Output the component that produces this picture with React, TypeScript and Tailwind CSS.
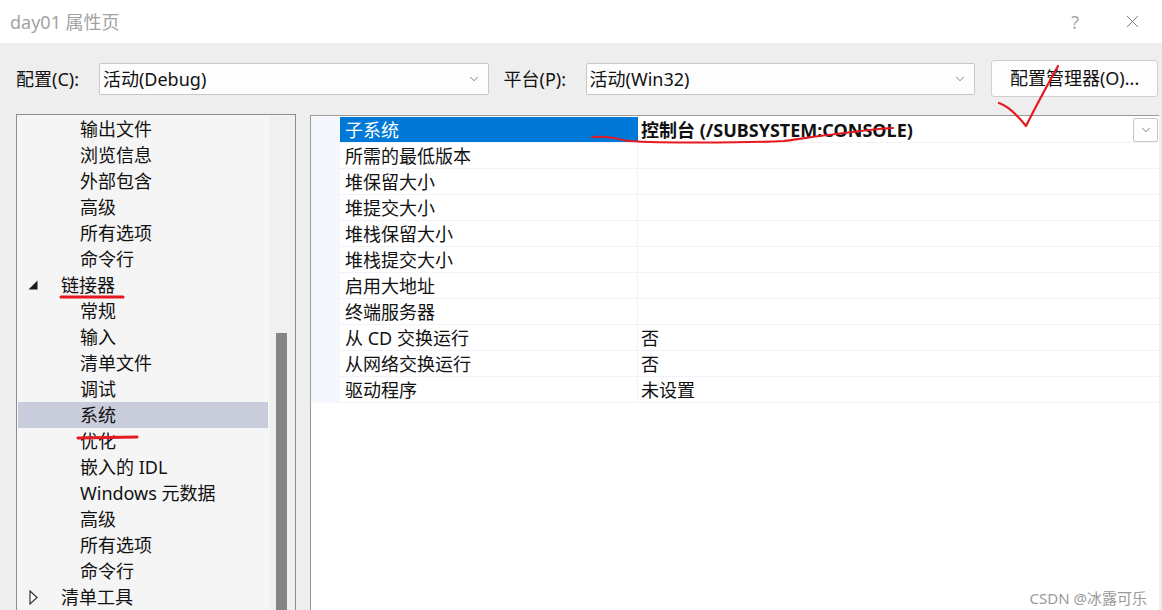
import { ChevronDown, X } from "lucide-react";

const treeTop = [
  { label: "输出文件", level: 1 },
  { label: "浏览信息", level: 1 },
  { label: "外部包含", level: 1 },
  { label: "高级", level: 1 },
  { label: "所有选项", level: 1 },
  { label: "命令行", level: 1 },
  { label: "链接器", level: 0, arrow: "open" },
  { label: "常规", level: 1 },
  { label: "输入", level: 1 },
  { label: "清单文件", level: 1 },
  { label: "调试", level: 1 },
  { label: "系统", level: 1, selected: true },
  { label: "优化", level: 1 },
  { label: "嵌入的 IDL", level: 1 },
  { label: "Windows 元数据", level: 1 },
  { label: "高级", level: 1 },
  { label: "所有选项", level: 1 },
  { label: "命令行", level: 1 },
  { label: "清单工具", level: 0, arrow: "closed" },
];

const props = [
  { name: "所需的最低版本", value: "" },
  { name: "堆保留大小", value: "" },
  { name: "堆提交大小", value: "" },
  { name: "堆栈保留大小", value: "" },
  { name: "堆栈提交大小", value: "" },
  { name: "启用大地址", value: "" },
  { name: "终端服务器", value: "" },
  { name: "从 CD 交换运行", value: "否" },
  { name: "从网络交换运行", value: "否" },
  { name: "驱动程序", value: "未设置" },
];

function Select({ text, width }: { text: string; width: string }) {
  return (
    <div className={`${width} h-[32px] flex items-center justify-between pl-[3px] pr-[7px] bg-[#fdfdfd] border border-[#c8c8c8] rounded-[2px]`}>
      <span>{text}</span>
      <ChevronDown size={14} strokeWidth={1.25} className="text-[#555]" />
    </div>
  );
}

function TreeRow({ label, level, arrow, selected }: { label: string; level: number; arrow?: string; selected?: boolean }) {
  return (
    <div className={`h-[26px] flex items-center whitespace-nowrap ${selected ? "bg-[#c9ccda]" : ""}`}>
      <div className="w-[26px] shrink-0 flex items-center justify-end pr-[6px]">
        {arrow === "open" && (
          <svg width="10" height="10" viewBox="0 0 10 10" className="mt-[-1px]">
            <path d="M9.5 0.5V9.5H0.5Z" fill="#1c1c1c" />
          </svg>
        )}
        {arrow === "closed" && (
          <svg width="9" height="15" viewBox="0 0 9 15" className="mt-[1px]">
            <path d="M1 1L8 7.5L1 14Z" fill="#fff" stroke="#333" strokeWidth="1.2" />
          </svg>
        )}
      </div>
      <span className={level === 1 ? "pl-[36px]" : "pl-[17px]"}>{label}</span>
    </div>
  );
}

function PropRow({ name, value }: { name: string; value: string }) {
  return (
    <div className="h-[26px] flex border-b border-[#f0f3f9]">
      <div className="w-[298px] shrink-0 pl-[5px] flex items-center border-r border-[#f0f3f9]">{name}</div>
      <div className="flex-1 pl-[3px] flex items-center">{value}</div>
    </div>
  );
}

export default function App() {
  return (
    <div
      className="relative w-[1162px] h-[610px] overflow-hidden bg-[#eeeeee] text-[18px] leading-[26px] text-[#111]"
      style={{ fontFamily: '"Noto Sans", "Noto Sans CJK SC", sans-serif' }}
    >
      {/* title bar */}
      <div className="h-[43px] bg-white flex items-center justify-between pl-[10px] pr-[19px] text-[#a3a3a3]">
        <span>day01 属性页</span>
        <div className="flex items-center gap-[43px]">
          <span className="text-[#aaa]">?</span>
          <X size={21} strokeWidth={1.1} className="text-[#777]" />
        </div>
      </div>

      {/* config row */}
      <div className="h-[71px] flex items-center pl-[16px] pr-[4px] pt-[1px]">
        <span className="w-[83px]">配置(C):</span>
        <Select text="活动(Debug)" width="w-[390px]" />
        <span className="ml-[15px] w-[82px]">平台(P):</span>
        <Select text="活动(Win32)" width="w-[390px]" />
        <div className="ml-[16px] w-[167px] h-[37px] mt-[-2px] flex items-center justify-center bg-[#fdfdfd] border border-[#cfcfcf] rounded-[3px]">
          配置管理器(O)...
        </div>
      </div>

      {/* panels */}
      <div className="flex pl-[16px] pr-[3px]">
        <div className="w-[280px] h-[520px] shrink-0 flex bg-[#f5f5f5] border border-[#8a8f94] pl-[1px] pt-[1px]">
          <div className="flex-1 min-w-0">
            {treeTop.map((row, i) => (
              <TreeRow key={i} {...row} />
            ))}
          </div>
          <div className="w-[27px] shrink-0 bg-[#f0f0f0] border-l border-[#fafafa] pl-[7px]">
            <div className="w-[11px] h-[280px] mt-[217px] bg-[#858585]" />
          </div>
        </div>

        <div className="ml-[14px] flex-1 h-[520px] mt-[1px] flex bg-white border-l border-t border-[#9a9a9a] pt-[1px]">
          <div className="w-[29px] h-[286px] shrink-0 bg-[#f4f7fc]" />
          <div className="flex-1 min-w-0">
            <div className="h-[26px] flex border-b border-[#f0f3f9]">
              <div className="w-[298px] shrink-0 pl-[5px] flex items-center bg-[#0078d7] text-white">子系统</div>
              <div className="flex-1 pl-[3px] flex items-center justify-between pr-[1px] font-bold">
                <span>控制台 (/SUBSYSTEM:CONSOLE)</span>
                <div className="w-[25px] h-[24px] flex items-center justify-center bg-[#fdfdfd] border border-[#c8c8c8] rounded-[2px]">
                  <ChevronDown size={14} strokeWidth={1.25} className="text-[#555]" />
                </div>
              </div>
            </div>
            {props.map((row) => (
              <PropRow key={row.name} {...row} />
            ))}
          </div>
        </div>
      </div>

      {/* red pen marks drawn over the screenshot */}
      <svg className="absolute inset-0 pointer-events-none" width="1162" height="610" fill="none" stroke="#e5191f" strokeLinecap="round" strokeLinejoin="round">
        <path d="M592 137C604 136 616 138 628 141C660 143 740 143 784 141C820 136 860 130 893 128" strokeWidth="2.2" />
        <path d="M999 103C1008 106 1018 116 1026 126C1036 106 1048 84 1058 66" strokeWidth="2.2" />
        <path d="M61 297H123" strokeWidth="3" />
        <path d="M78 438L137 437" strokeWidth="3" />
      </svg>

      <div className="absolute right-[15px] bottom-[1px] text-[15px] leading-[22px] text-[#9a9a9a]">CSDN @冰露可乐</div>
    </div>
  );
}
